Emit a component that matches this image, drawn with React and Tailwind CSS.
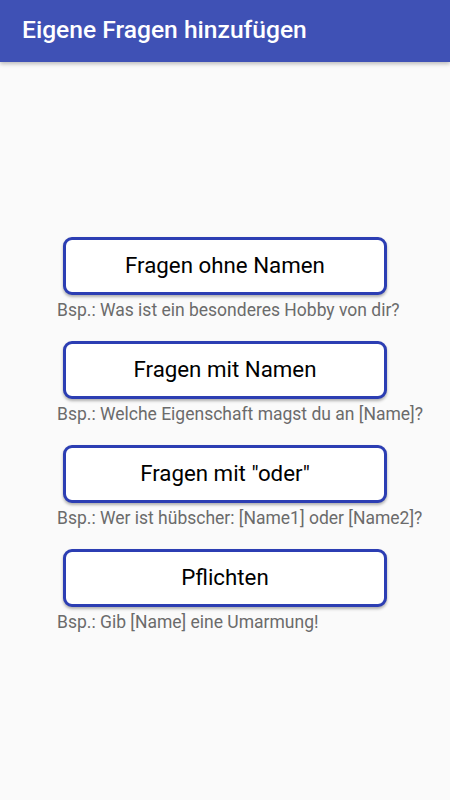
import React from "react";

const categories = [
  { title: "Fragen ohne Namen", example: "Bsp.: Was ist ein besonderes Hobby von dir?" },
  { title: "Fragen mit Namen", example: "Bsp.: Welche Eigenschaft magst du an [Name]?" },
  { title: 'Fragen mit "oder"', example: "Bsp.: Wer ist hübscher: [Name1] oder [Name2]?" },
  { title: "Pflichten", example: "Bsp.: Gib [Name] eine Umarmung!" },
];

const App = () => {
  return (
    <div className="w-[450px] h-[800px] bg-[#fafafa] flex flex-col font-['Roboto',sans-serif]">
      <header className="h-[62px] shrink-0 bg-[#3f51b5] flex items-center px-[22px] shadow-[0_2px_4px_rgba(0,0,0,0.25)] z-10">
        <h1 className="text-white text-[24.6px] font-medium leading-none -mt-[2px]">Eigene Fragen hinzufügen</h1>
      </header>

      <main className="flex-1 flex flex-col justify-center items-center pt-[6px]">
        <div className="w-[336px] flex flex-col">
          {categories.map((cat, index) => (
            <div key={index} className={index > 0 ? "mt-[21px]" : ""}>
              <button className="mx-[6px] w-[324px] h-[58px] bg-white border-[3px] border-[#2c3eb3] rounded-[9px] shadow-[0_2px_3px_rgba(0,0,0,0.3)] text-black text-[22.3px] flex items-center justify-center">
                {cat.title}
              </button>
              <p className="mt-[6px] text-[17.5px] leading-[19px] text-[#6b6b6b] whitespace-nowrap">{cat.example}</p>
            </div>
          ))}
        </div>
      </main>
    </div>
  );
};

export default App;
